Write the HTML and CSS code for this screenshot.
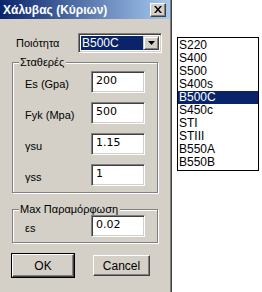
FILE: index.html
```html
<!DOCTYPE html>
<html lang="el">
<head>
    <meta charset="UTF-8">
    <meta name="viewport" content="width=device-width, initial-scale=1.0">
    <title>Χάλυβας (Κύριων)</title>
    <link rel="stylesheet" href="styles.css">
</head>
<body>
    <div class="desk">
        <div class="window">
            <div class="titlebar">
                <span class="title">Χάλυβας (Κύριων)</span>
                <span class="close">
                    <svg width="8" height="7" viewBox="0 0 8 7">
                        <path d="M0 0h2l2 2.5 2-2.5h2l-3 3.5 3 3.5h-2l-2-2.5-2 2.5h-2l3-3.5z" fill="#000"/>
                    </svg>
                </span>
            </div>
            <div class="dialog">
                <div class="quality">
                    <label class="quality-label">Ποιότητα</label>
                    <div class="combo">
                        <span class="combo-text">B500C</span>
                        <span class="combo-btn">
                            <svg width="7" height="4" viewBox="0 0 7 4"><path d="M0 0h7l-3.5 4z" fill="#000"/></svg>
                        </span>
                    </div>
                </div>

                <fieldset class="group">
                    <legend>Σταθερές</legend>
                    <div class="field">
                        <label>Es (Gpa)</label>
                        <input class="box" type="text" value="200">
                    </div>
                    <div class="field">
                        <label>Fyk (Mpa)</label>
                        <input class="box" type="text" value="500">
                    </div>
                    <div class="field">
                        <label>γsu</label>
                        <input class="box" type="text" value="1.15">
                    </div>
                    <div class="field">
                        <label>γss</label>
                        <input class="box" type="text" value="1">
                    </div>
                </fieldset>

                <fieldset class="group group-max">
                    <legend>Max Παραμόρφωση</legend>
                    <div class="field">
                        <label>εs</label>
                        <input class="box" type="text" value="0.02">
                    </div>
                </fieldset>

                <div class="actions">
                    <button class="btn btn-default">OK</button>
                    <button class="btn btn-cancel">Cancel</button>
                </div>
            </div>
        </div>

        <ul class="listbox">
            <li>S220</li>
            <li>S400</li>
            <li>S500</li>
            <li>S400s</li>
            <li class="selected">B500C</li>
            <li>S450c</li>
            <li>STI</li>
            <li>STIII</li>
            <li>B550A</li>
            <li>B550B</li>
        </ul>
    </div>
</body>
</html>
```

FILE: styles.css
```css
body {
    margin: 0;
    background-color: #fff;
    font-family: "Liberation Sans", Arial, sans-serif;
    font-size: 11px;
    color: #000;
}

.desk {
    display: flex;
    align-items: flex-start;
}

.window {
    width: 170px;
    height: 292px;
    background-color: #d4d0c8;
    border-right: 1px solid #404040;
    box-shadow: inset -1px 0 0 #808080;
    padding-right: 1px;
}

.titlebar {
    height: 19px;
    display: flex;
    align-items: center;
    justify-content: space-between;
    padding: 0 4px 0 3px;
    background: linear-gradient(to right, #0a246a, #a6caf0);
}

.title {
    color: #fff;
    font-weight: bold;
    font-size: 12px;
}

.close {
    width: 16px;
    height: 14px;
    box-sizing: border-box;
    display: flex;
    align-items: center;
    justify-content: center;
    background-color: #d4d0c8;
    border-top: 1px solid #fff;
    border-left: 1px solid #fff;
    border-right: 1px solid #404040;
    border-bottom: 1px solid #404040;
    box-shadow: inset -1px -1px 0 #808080;
}

.dialog {
    padding: 14px 8px 0 12px;
}

/* combo row */
.quality {
    display: flex;
    align-items: center;
}

.quality-label {
    width: 62px;
    padding-left: 4px;
}

.combo {
    width: 84px;
    height: 20px;
    box-sizing: border-box;
    display: flex;
    align-items: stretch;
    background-color: #fff;
    border-top: 1px solid #808080;
    border-left: 1px solid #808080;
    border-right: 1px solid #fff;
    border-bottom: 1px solid #fff;
    box-shadow: inset 1px 1px 0 #404040, inset -1px -1px 0 #d4d0c8;
    padding: 2px;
}

.combo-text {
    flex: 1;
    background-color: #0a246a;
    color: #fff;
    font-size: 12px;
    line-height: 14px;
    padding-left: 1px;
}

.combo-btn {
    width: 16px;
    box-sizing: border-box;
    display: flex;
    align-items: center;
    justify-content: center;
    background-color: #d4d0c8;
    border-top: 1px solid #d4d0c8;
    border-left: 1px solid #d4d0c8;
    border-right: 1px solid #404040;
    border-bottom: 1px solid #404040;
    box-shadow: inset 1px 1px 0 #fff, inset -1px -1px 0 #808080;
}

/* group boxes */
.group {
    width: 146px;
    box-sizing: border-box;
    margin: 3px 0 0;
    padding: 3px 0 6px 12px;
    border: 1px solid #808080;
    box-shadow: 1px 1px 0 #fff, inset 1px 1px 0 #fff;
}

.group legend {
    padding: 0 2px 0 1px;
    margin-left: -6px;
    background-color: #d4d0c8;
    font-size: 11px;
}

.group-max {
    margin-top: 10px;
    padding-top: 0;
    padding-bottom: 5px;
}

.field {
    display: flex;
    align-items: center;
    height: 22px;
    margin-bottom: 9px;
}

.field:last-child {
    margin-bottom: 0;
}

.field label {
    width: 66px;
    font-size: 11px;
    padding-top: 4px;
}

.box {
    width: 54px;
    height: 22px;
    box-sizing: border-box;
    margin: 0;
    padding: 0 4px 4px;
    font-family: "DejaVu Sans", sans-serif;
    font-size: 11px;
    background-color: #fff;
    border-top: 1px solid #808080;
    border-left: 1px solid #808080;
    border-right: 1px solid #fff;
    border-bottom: 1px solid #fff;
    box-shadow: inset 1px 1px 0 #404040, inset -1px -1px 0 #d4d0c8;
    outline: none;
}

/* buttons */
.actions {
    display: flex;
    align-items: center;
    margin-top: 11px;
}

.btn {
    height: 21px;
    box-sizing: border-box;
    padding: 0;
    font-family: "Liberation Sans", Arial, sans-serif;
    font-size: 12px;
    color: #000;
    background-color: #d4d0c8;
    border-top: 1px solid #fff;
    border-left: 1px solid #fff;
    border-right: 1px solid #404040;
    border-bottom: 1px solid #404040;
    box-shadow: inset -1px -1px 0 #808080;
}

.btn-default {
    width: 62px;
    height: 23px;
    outline: 1px solid #000;
    outline-offset: 0;
}

.btn-cancel {
    width: 57px;
    margin-left: 19px;
}

/* list */
.listbox {
    width: 82px;
    box-sizing: border-box;
    margin: 37px 0 0 5px;
    padding: 1px 0;
    list-style: none;
    border: 1px solid #000;
    font-family: "Liberation Sans", Arial, sans-serif;
    font-size: 12px;
}

.listbox li {
    height: 13px;
    line-height: 13px;
    padding-left: 1px;
}

.listbox .selected {
    background-color: #0a246a;
    color: #fff;
}
```
